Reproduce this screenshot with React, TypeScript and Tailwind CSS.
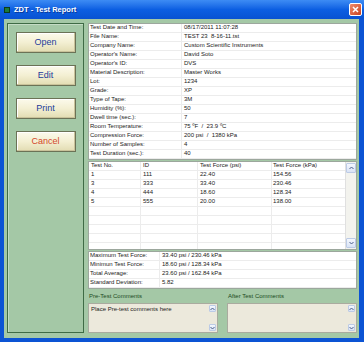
import React from "react";

const info: [string, string][] = [
  ["Test Date and Time:", "08/17/2011 11:07:28"],
  ["File Name:", "TEST 23  8-16-11.tst"],
  ["Company Name:", "Custom Scientific Instruments"],
  ["Operator's Name:", "David Soto"],
  ["Operator's ID:", "DVS"],
  ["Material Description:", "Master Works"],
  ["Lot:", "1234"],
  ["Grade:", "XP"],
  ["Type of Tape:", "3M"],
  ["Humidity (%):", "50"],
  ["Dwell time (sec.):", "7"],
  ["Room Temperature:", "75 ºF  /  23.9 ºC"],
  ["Compression Force:", "200 psi  /  1380 kPa"],
  ["Number of Samples:", "4"],
  ["Test Duration (sec.):", "40"],
];

const tests: string[][] = [
  ["1", "111", "22.40", "154.56"],
  ["3", "333", "33.40", "230.46"],
  ["4", "444", "18.60", "128.34"],
  ["5", "555", "20.00", "138.00"],
  ["", "", "", ""],
  ["", "", "", ""],
  ["", "", "", ""],
  ["", "", "", ""],
  ["", "", "", ""],
];

const summary: [string, string][] = [
  ["Maximum Test Force:", "33.40 psi / 230.46 kPa"],
  ["Minimun Test Force:", "18.60 psi / 128.34 kPa"],
  ["Total Average:", "23.60 psi / 162.84 kPa"],
  ["Standard Deviation:", "5.82"],
];

function Btn({ label, color }: { label: string; color: string }) {
  return (
    <div
      className="w-[60px] h-[21px] flex items-center justify-center border border-[#6b7256] bg-gradient-to-b from-[#fcfaec] via-[#f3efd2] to-[#e2dcb2] shadow-[inset_-1px_-1px_0_#c9c29a,inset_1px_1px_0_#ffffff] text-[9px]"
      style={{ color }}
    >
      {label}
    </div>
  );
}

function Arrow({ up, w }: { up: boolean; w: number }) {
  return (
    <div
      className="flex items-center justify-center border border-[#bccbe6] bg-gradient-to-b from-[#f4f7fd] to-[#d9e3f5] rounded-[1px]"
      style={{ width: w, height: w }}
    >
      <svg width={5} height={4} viewBox="0 0 5 4">
        <path
          d={up ? "M0.5 3 L2.5 1 L4.5 3" : "M0.5 1 L2.5 3 L4.5 1"}
          fill="none"
          stroke="#4a5f8a"
          strokeWidth={1}
        />
      </svg>
    </div>
  );
}

function CommentBox({ label, text }: { label: string; text: string }) {
  return (
    <div className="w-[130px] flex flex-col">
      <div className="h-[14px] flex items-center pl-[1px] text-[6px] text-[#1d4a22]">{label}</div>
      <div className="h-[30px] border border-[#a9ab9f] bg-[#ece9dc] flex">
        <div className="flex-1 pl-[2px] pt-[2px] text-[6px] leading-[7px] text-[#222]">{text}</div>
        <div className="w-[8px] flex flex-col justify-between items-center py-[1px] mr-[1px]">
          <Arrow up w={7} />
          <Arrow up={false} w={7} />
        </div>
      </div>
    </div>
  );
}

export default function App() {
  return (
    <div
      className="w-[364px] h-[342px] bg-[#0c54d4] flex flex-col overflow-hidden"
      style={{ fontFamily: '"Liberation Sans", Arial, sans-serif' }}
    >
      <div className="h-[19px] flex items-center pl-[4px] pr-[2px] bg-gradient-to-b from-[#3d8cf4] via-[#0c5fe2] to-[#0852d2]">
        <div className="w-[6px] h-[6px] bg-[#1d7a3a] border border-[#0c3b1a]" />
        <div className="ml-[4px] text-white font-bold text-[7.5px] [text-shadow:1px_1px_0_#0a3a9a] whitespace-pre">
          ZDT - Test Report
        </div>
        <div className="ml-auto w-[13px] h-[13px] rounded-[2px] border border-white bg-gradient-to-br from-[#ef8a6a] to-[#c8401c] flex items-center justify-center">
          <svg width={7} height={7} viewBox="0 0 7 7">
            <path d="M1 1 L6 6 M6 1 L1 6" stroke="white" strokeWidth={1.5} />
          </svg>
        </div>
      </div>
      <div className="flex-1 ml-[4px] mr-[5px] mb-[4px] bg-[#a4c8a6] flex pt-[4px] pl-[3px] pr-[2px]">
        <div className="w-[77px] h-[310px] border border-[#3f6b45] shadow-[inset_1px_1px_0_#c4dcc5] flex flex-col items-center pt-[8px] gap-[12px]">
          <Btn label="Open" color="#1e3d9a" />
          <Btn label="Edit" color="#1e3d9a" />
          <Btn label="Print" color="#1e3d9a" />
          <Btn label="Cancel" color="#d2482a" />
        </div>
        <div className="ml-[4px] w-[269px] flex flex-col text-[6px] text-[#222]">
          <div className="h-[137px] border border-[#9ca79d] bg-white overflow-hidden">
            {info.map(([k, v], i) => (
              <div key={i} className="h-[9px] flex border-b border-[#ececec] leading-[7px]">
                <div className="w-[93px] pl-[1px] border-r border-[#ececec] whitespace-pre">{k}</div>
                <div className="flex-1 pl-[2px] whitespace-pre">{v}</div>
              </div>
            ))}
          </div>
          <div className="mt-[1px] h-[89px] border border-[#9ca79d] bg-white flex overflow-hidden">
            <div className="flex-1 flex flex-col">
              {[["Test No.", "ID", "Test Force (psi)", "Test Force (kPa)"], ...tests].map((r, i) => (
                <div key={i} className="h-[9px] shrink-0 flex border-b border-[#ececec] leading-[7px]">
                  <div className="w-[52px] pl-[2px] border-r border-[#ececec]">{r[0]}</div>
                  <div className="w-[57px] pl-[2px] border-r border-[#ececec]">{r[1]}</div>
                  <div className="w-[74px] pl-[2px] border-r border-[#ececec]">{r[2]}</div>
                  <div className="flex-1 pl-[1px]">{r[3]}</div>
                </div>
              ))}
            </div>
            <div className="w-[11px] bg-[#f3f3ee] border-l border-[#e0e0e0] flex flex-col justify-between items-center py-[1px]">
              <Arrow up w={10} />
              <Arrow up={false} w={10} />
            </div>
          </div>
          <div className="mt-[1px] h-[38px] border border-[#9ca79d] bg-white overflow-hidden">
            {summary.map(([k, v], i) => (
              <div key={i} className="h-[9px] flex border-b border-[#ececec] leading-[7px]">
                <div className="w-[71px] pl-[1px] border-r border-[#ececec]">{k}</div>
                <div className="flex-1 pl-[2px]">{v}</div>
              </div>
            ))}
          </div>
          <div className="flex justify-between">
            <CommentBox label="Pre-Test Comments" text="Place Pre-test comments here" />
            <CommentBox label="After Test Comments" text="" />
          </div>
        </div>
      </div>
    </div>
  );
}
